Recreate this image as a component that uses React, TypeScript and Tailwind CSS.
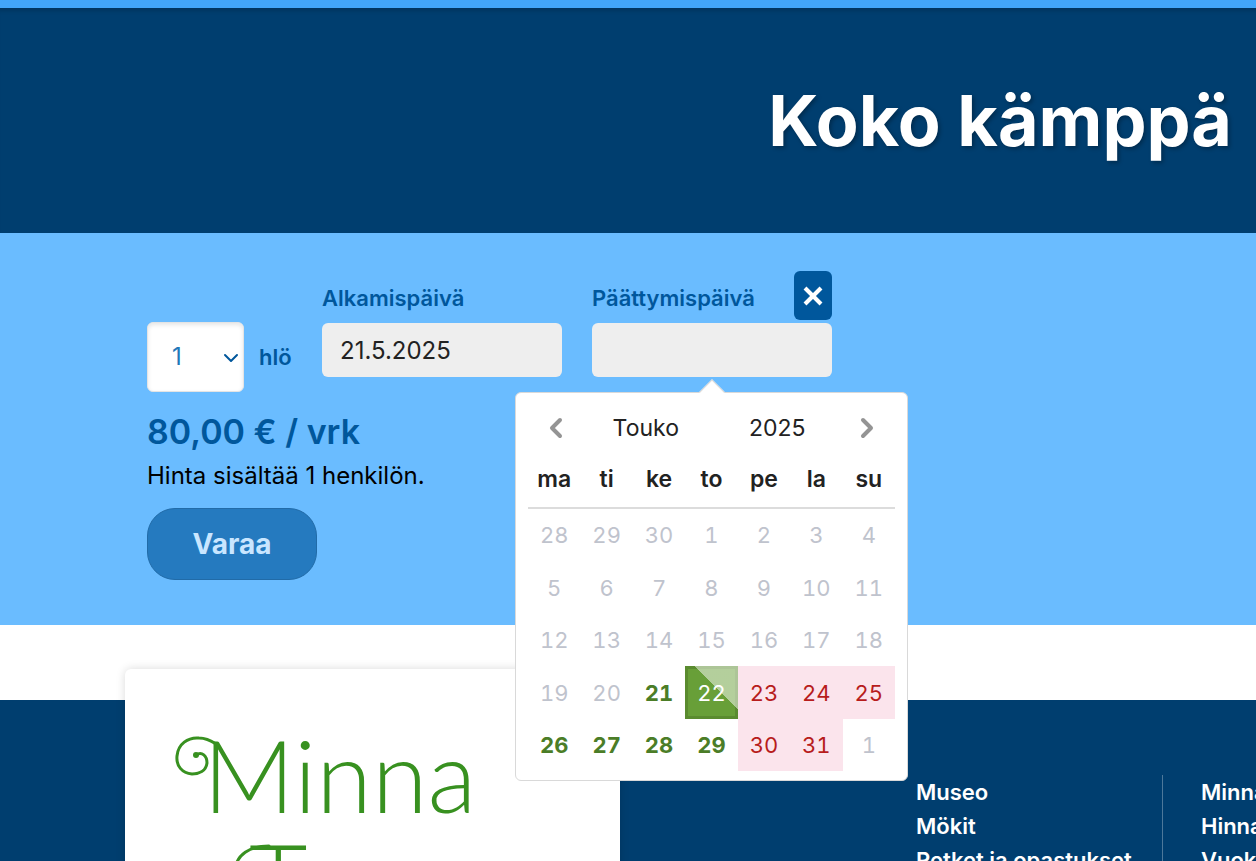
import { useState } from 'react';
import { ChevronDown, ChevronLeft, ChevronRight, X } from 'lucide-react';

type DayState = 'muted' | 'free' | 'booked' | 'selected';

const weekdays = ['ma', 'ti', 'ke', 'to', 'pe', 'la', 'su'];

const weeks: number[][] = [
  [28, 29, 30, 1, 2, 3, 4],
  [5, 6, 7, 8, 9, 10, 11],
  [12, 13, 14, 15, 16, 17, 18],
  [19, 20, 21, 22, 23, 24, 25],
  [26, 27, 28, 29, 30, 31, 1],
];

const booked = [23, 24, 25, 30, 31];

const dayState = (week: number, day: number): DayState => {
  if (week < 3 || day < 21) return 'muted';
  if (booked.includes(day)) return 'booked';
  return day === 22 ? 'selected' : 'free';
};

const dayStyles: Record<DayState, string> = {
  muted: 'text-[#bfc3cd]',
  free: 'font-bold text-[#4b7d27]',
  booked: 'text-[#b71c1c]',
  selected:
    'relative border-3 border-[#5a8b2f] bg-[#689f38] text-white before:absolute before:-inset-[3px] before:bg-[linear-gradient(45deg,transparent_59%,rgba(255,255,255,0.5)_59%)]',
};

const Calendar = () => (
  <div className="absolute -left-[77px] top-full z-20 mt-[15px] w-[393px] rounded-md border border-[#d9d9d9] bg-white px-3 pb-[9px] pt-3 text-[#222]">
    <div className="absolute -top-[10px] left-1/2 size-[18px] -translate-x-1/2 rotate-45 border-l border-t border-[#d9d9d9] bg-white" />
    <div className="relative grid h-[46px] grid-cols-[52px_1fr_1fr_52px] items-center">
      <button aria-label="Edellinen" className="flex justify-center pl-1 text-[#949494]">
        <ChevronLeft size={32} strokeWidth={3} />
      </button>
      <select aria-label="Kuukausi" defaultValue="Touko" className="appearance-none text-center">
        <option>Touko</option>
      </select>
      <select aria-label="Vuosi" defaultValue="2025" className="appearance-none text-center">
        <option>2025</option>
      </select>
      <button aria-label="Seuraava" className="flex justify-center pr-1 text-[#949494]">
        <ChevronRight size={32} strokeWidth={3} />
      </button>
    </div>
    <table className="w-full table-fixed border-collapse">
      <thead>
        <tr className="h-[57px] border-b-2 border-[#dcdcdc]">
          {weekdays.map((day) => (
            <th key={day} className="p-0 text-center font-semibold">{day}</th>
          ))}
        </tr>
      </thead>
      <tbody>
        {weeks.map((week, w) => (
          <tr key={w}>
            {week.map((day, d) => {
              const state = dayState(w, day);
              return (
                <td key={d} className={state === 'booked' ? 'bg-[#fbe4ec] p-0' : 'p-0'}>
                  <button className={`flex aspect-square w-full items-center justify-center text-[22px] tabular-nums ${dayStyles[state]}`}>
                    <span className="relative">{day}</span>
                  </button>
                </td>
              );
            })}
          </tr>
        ))}
      </tbody>
    </table>
  </div>
);

const Logo = () => (
  <svg viewBox="0 0 320 200" className="block w-80 text-[#389120]" fill="currentColor" role="img" aria-label="Minna">
    <text fontSize="101" fontWeight="300" fontFamily="Lato, sans-serif">
      <tspan x="28" y="84">Minna</tspan>
      <tspan x="74" y="188">T</tspan>
    </text>
    {/* flourishes leading into the capitals */}
    <g fill="none" stroke="currentColor" strokeWidth="3" strokeLinecap="round">
      <path d="M21 26 C27 22 32 27 32 34 C31 42 24 45 17 45 C7 44 1 37 2 27 C3 15 13 8 24 9 C30 9 35 11 41 15" />
      <path d="M60 140 C62 126 74 117 94 117" />
    </g>
    <circle cx="21" cy="26" r="3" />
  </svg>
);

const menus = [
  ['Museo', 'Mökit', 'Retket ja opastukset'],
  ['Minna', 'Hinnasto', 'Vuokraus'],
];

const App = () => {
  const [start, setStart] = useState('21.5.2025');
  const [end, setEnd] = useState('');

  return (
    <div className="h-screen overflow-hidden bg-white font-[Inter,sans-serif] text-[23px] leading-8">
      <div className="h-2 bg-[#42a5f8]" />
      <header className="bg-[#003e6f] px-6 pb-16 pt-[65px] shadow-[inset_0_6px_5px_-4px_rgba(0,0,0,0.2)]">
        <h1 className="text-right text-[70px] font-bold leading-24 text-white [text-shadow:2px_2px_4px_rgba(0,0,0,0.3)]">Koko kämppä</h1>
      </header>

      <form className="bg-[#6abcff] pb-[45px] pl-[147px] pt-[38px]" onSubmit={(e) => e.preventDefault()}>
        <div className="flex items-start text-[#00579c]">
          <div className="mt-[51px] flex w-[175px] items-center gap-[15px]">
            <div className="relative">
              <select id="persons" className="h-[70px] w-[97px] appearance-none rounded-md border border-[#e4e4e4] bg-white pl-6 text-2xl text-[#2277b8] shadow-[inset_0_2px_4px_rgba(0,0,0,0.1)]">
                <option>1</option>
              </select>
              <ChevronDown size={24} className="pointer-events-none absolute right-px top-6" />
            </div>
            <label htmlFor="persons" className="text-[22px] font-semibold">hlö</label>
          </div>

          <div className="mr-[30px] w-60">
            <div className="mb-[3px] flex h-[49px] items-center pt-1">
              <label htmlFor="start" className="text-[22px] font-semibold">Alkamispäivä</label>
            </div>
            <input id="start" value={start} onChange={(e) => setStart(e.target.value)} className="block h-[54px] w-full rounded-md bg-[#eee] px-[18px] text-2xl text-[#222]" />
          </div>

          <div className="relative w-60">
            <div className="mb-[3px] flex h-[49px] items-stretch justify-between">
              <label htmlFor="end" className="self-center pt-1 text-[22px] font-semibold">Päättymispäivä</label>
              <button type="button" aria-label="Tyhjennä" onClick={() => setEnd('')} className="flex w-[38px] items-center justify-center rounded-md bg-[#00579c] text-white">
                <X size={32} strokeWidth={3} strokeLinecap="butt" />
              </button>
            </div>
            <input id="end" value={end} onChange={(e) => setEnd(e.target.value)} className="block h-[54px] w-full rounded-md bg-[#eee] px-[18px] text-2xl text-[#222]" />
            <Calendar />
          </div>
        </div>

        <p className="mt-3 text-[34px] font-semibold leading-14 text-[#00579c]">80,00 € / vrk</p>
        <p className="text-2xl leading-8 text-black">Hinta sisältää 1 henkilön.</p>
        <button className="mt-4 h-[72px] w-[170px] rounded-[28px] border border-[#216ba8] bg-[#257abf] text-[28px] font-bold text-[#c9e6ff]">Varaa</button>
      </form>

      <footer className="mt-[75px] flex min-h-80 items-start bg-[#003e6f] pl-[125px] text-white">
        <div className="-mt-[31px] min-h-96 w-[495px] shrink-0 rounded-t-md bg-white pl-[50px] pt-[60px] shadow-[0_0_10px_rgba(0,0,0,0.15)]">
          <Logo />
        </div>
        <nav className="ml-[296px] mt-[75px] flex shrink-0">
          {menus.map((items) => (
            <ul key={items[0]} className="mr-[38px] w-[247px] border-r border-white/30">
              {items.map((item) => (
                <li key={item} className="whitespace-nowrap text-[22px] font-semibold leading-[34px]">
                  <a href="#">{item}</a>
                </li>
              ))}
            </ul>
          ))}
        </nav>
      </footer>
    </div>
  );
};

export default App;
